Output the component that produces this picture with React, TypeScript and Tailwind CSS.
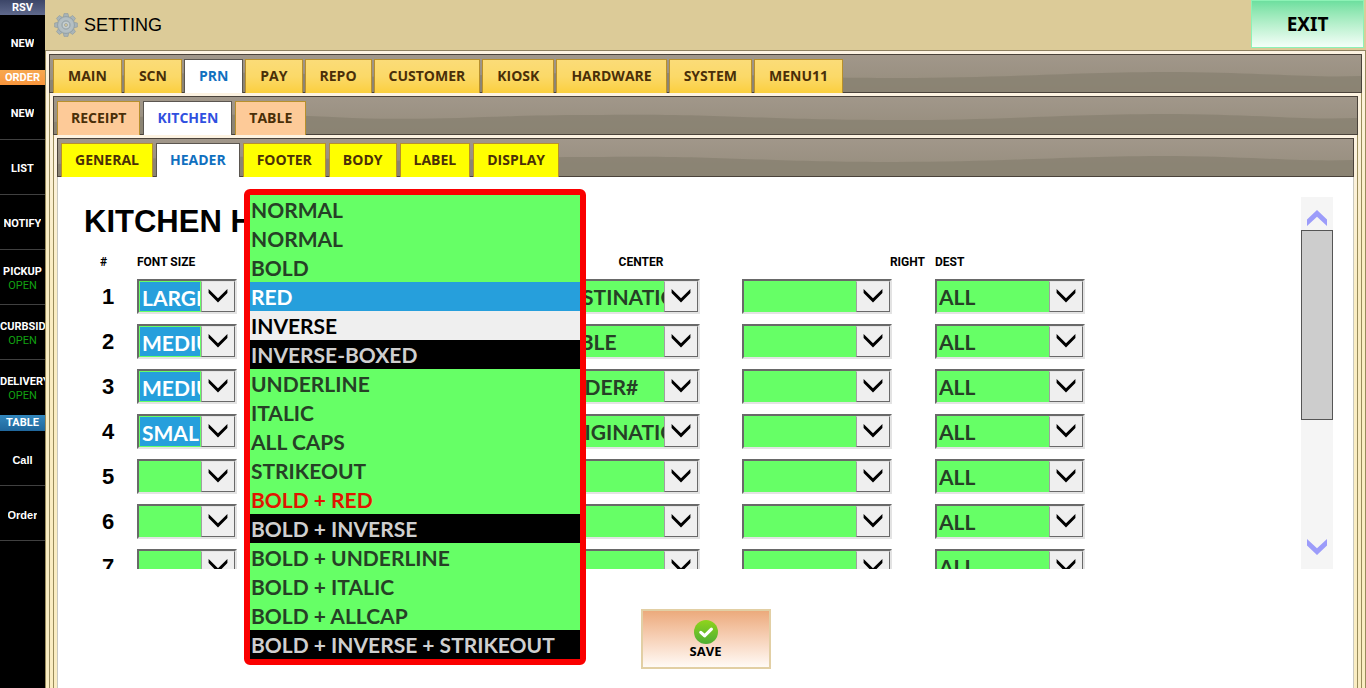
import { useState, type ReactNode } from "react";

type SideEntry = { kind: "heading" | "item"; label: string; tone?: string; open?: boolean; last?: boolean };

const SIDE: SideEntry[] = [
  { kind: "heading", label: "RSV", tone: "h-[15px] bg-linear-to-b from-[#3c4668] to-[#5f698c]" },
  { kind: "item", label: "NEW", last: true },
  { kind: "heading", label: "ORDER", tone: "h-[15px] bg-linear-to-b from-[#f7a850] to-[#f8953c]" },
  { kind: "item", label: "NEW" },
  { kind: "item", label: "LIST" },
  { kind: "item", label: "NOTIFY" },
  { kind: "item", label: "PICKUP", open: true },
  { kind: "item", label: "CURBSIDE", open: true },
  { kind: "item", label: "DELIVERY", open: true, last: true },
  { kind: "heading", label: "TABLE", tone: "h-[16px] bg-linear-to-b from-[#3287bd] to-[#20679c]" },
  { kind: "item", label: "Call" },
  { kind: "item", label: "Order" },
];

function Sidebar() {
  return (
    <nav aria-label="Orders" className="w-[45px] shrink-0 overflow-hidden bg-black font-['Roboto',sans-serif] text-[11px] leading-[14px] font-bold text-white">
      {SIDE.map((e, i) =>
        e.kind === "heading" ? (
          <div key={i} className={`flex items-center justify-center ${e.tone}`}>
            {e.label}
          </div>
        ) : (
          <button
            key={i}
            type="button"
            className={`flex h-[55px] w-full flex-col items-center justify-center border-b pt-[3px] ${e.last ? "border-black" : "border-[#404040]"} ${
              e.label === "Call" || e.label === "Order" ? "font-['Liberation_Sans',sans-serif]" : ""
            }`}
          >
            <span className="max-w-full overflow-hidden">{e.label}</span>
            {e.open && <span className="font-normal text-[#12a012]">OPEN</span>}
          </button>
        ),
      )}
    </nav>
  );
}

function GearIcon() {
  return (
    <svg aria-hidden="true" viewBox="0 0 24 24" className="size-6">
      <g fill="#a9b4b8" stroke="#8c999e" strokeWidth="0.6">
        {[0, 45, 90, 135, 180, 225, 270, 315].map((a) => (
          <path key={a} d="M9.2 4.6 10 0.6h4l0.8 4z" transform={`rotate(${a} 12 12)`} />
        ))}
        <circle cx="12" cy="12" r="8.6" />
      </g>
      <circle cx="12" cy="12" r="7.6" fill="#b4bfc3" />
      <circle cx="12" cy="12" r="4.4" fill="#a3aeb2" stroke="#95a1a6" strokeWidth="0.5" />
      <circle cx="12" cy="12" r="3.2" fill="#c6cfd1" />
      <circle cx="12" cy="12" r="1.5" fill="#dccb98" stroke="#87939a" strokeWidth="0.6" />
    </svg>
  );
}

type BarProps = { label: string; tabs: string[]; active: string; tone: string; activeTone: string; spacing: string; pad: string };

function TabBar({ label, tabs, active, tone, activeTone, spacing, pad }: BarProps) {
  return (
    <div className="relative h-[39px] shrink-0 border border-[#4a423a] bg-linear-to-b from-[#a1978a] to-[#958c7c]">
      <svg aria-hidden="true" viewBox="0 0 1312 37" preserveAspectRatio="none" className="absolute inset-0 size-full">
        <path
          d="M0 25C120 16 200 16 300 21C400 24 440 18 540 18C680 16 700 23 850 23C960 23 1020 17 1130 17C1220 18 1260 23 1312 21V37H0Z"
          fill="#878070"
          fillOpacity="0.75"
        />
      </svg>
      <div role="tablist" aria-label={label} className={`relative flex h-[38px] pt-[4px] pl-[3px] ${spacing}`}>
        {tabs.map((t) => {
          const on = t === active;
          return (
            <button
              key={t}
              type="button"
              role="tab"
              aria-selected={on}
              className={`border border-b-0 pb-[2px] text-[14px] leading-[18px] font-bold ${pad} ${
                on ? `border-[#5b5650] bg-white ${activeTone}` : `border-[#b8902c] text-[#4a2f08] ${tone}`
              }`}
            >
              {t}
            </button>
          );
        })}
      </div>
    </div>
  );
}

function Frame({ children }: { children: ReactNode }) {
  return (
    <div className="flex grow flex-col border-x border-[#998c5c] bg-linear-to-b from-[#fdf3e2] to-[#faedc2] to-30% px-[3px] pt-[3px]">
      {children}
    </div>
  );
}

function Field({ label, value, wide, marked }: { label: string; value: string; wide?: boolean; marked?: boolean }) {
  const choices = value === "" ? [""] : [value, ""];
  return (
    <div
      className={`flex h-[35px] border-2 border-t-[#696969] border-r-[#e3e3e3] border-b-[#e3e3e3] border-l-[#696969] bg-[#66ff66] ${
        wide ? "w-[150px]" : "w-[100px]"
      }`}
    >
      <select
        aria-label={label}
        defaultValue={value}
        className={`min-w-0 grow appearance-none overflow-hidden pl-[2px] font-['Lato',sans-serif] text-[21px] font-bold outline-none ${
          marked ? "m-px bg-[#269fdc] text-white" : "text-[#264026]"
        }`}
      >
        {choices.map((c) => (
          <option key={c} value={c}>
            {c}
          </option>
        ))}
      </select>
      <span className="flex w-[34px] shrink-0 justify-center border border-[#696969] border-t-[#e3e3e3] border-l-[#a0a0a0] bg-[#efefef] pt-[7px]">
        <svg aria-hidden="true" viewBox="0 0 20 14" className="h-[14px] w-[20px]">
          <path d="M0.6 0 10 9.2 19.4 0V4L10 13.6 0.6 4Z" fill="#000" />
        </svg>
      </span>
    </div>
  );
}

const ROWS = [
  { size: "LARGE", center: "DESTINATION" },
  { size: "MEDIUM", center: "TABLE" },
  { size: "MEDIUM", center: "ORDER#" },
  { size: "SMALL", center: "ORIGINATION" },
  { size: "", center: "" },
  { size: "", center: "" },
  { size: "", center: "" },
];

function FieldTable() {
  return (
    <table className="w-[1001px] table-fixed text-left">
      <colgroup>
        <col className="w-[53px]" />
        <col className="w-[107px]" />
        <col className="w-[107px]" />
        <col className="w-[199px]" />
        <col className="w-[192px]" />
        <col className="w-[193px]" />
        <col className="w-[150px]" />
      </colgroup>
      <thead>
        <tr className="h-[29px] font-['Roboto',sans-serif] text-[12px] leading-[16px] font-bold">
          <th className="pt-[4px] pl-[16px]">#</th>
          <th className="pt-[4px]">FONT SIZE</th>
          <th aria-label="Style" />
          <th aria-label="Left" />
          <th className="pt-[4px] pr-[10px] text-center">CENTER</th>
          <th className="pt-[4px] pr-[10px] text-right">RIGHT</th>
          <th className="pt-[4px]">DEST</th>
        </tr>
      </thead>
      <tbody>
        {ROWS.map((r, i) => (
          <tr key={i} className="h-[45px]">
            <th scope="row" className="pl-[18px] font-['Liberation_Sans',sans-serif] text-[22px] leading-[28px] font-bold">
              {i + 1}
            </th>
            <td><Field label={`Font size ${i + 1}`} value={r.size} marked={r.size !== ""} /></td>
            <td><Field label={`Style ${i + 1}`} value="" /></td>
            <td><Field label={`Left ${i + 1}`} value="" wide /></td>
            <td><Field label={`Center ${i + 1}`} value={r.center} wide /></td>
            <td><Field label={`Right ${i + 1}`} value="" wide /></td>
            <td><Field label={`Destination ${i + 1}`} value="ALL" wide /></td>
          </tr>
        ))}
      </tbody>
    </table>
  );
}

const BLACK = "bg-black text-[#cfcfcf]";
const STYLES: [string, string][] = [
  ["NORMAL", ""],
  ["NORMAL", ""],
  ["BOLD", ""],
  ["RED", "bg-[#269fdc] text-white"],
  ["INVERSE", "bg-[#efefef] text-black"],
  ["INVERSE-BOXED", BLACK],
  ["UNDERLINE", ""],
  ["ITALIC", ""],
  ["ALL CAPS", ""],
  ["STRIKEOUT", ""],
  ["BOLD + RED", "text-[#e01400]"],
  ["BOLD + INVERSE", BLACK],
  ["BOLD + UNDERLINE", ""],
  ["BOLD + ITALIC", ""],
  ["BOLD + ALLCAP", ""],
  ["BOLD + INVERSE + STRIKEOUT", BLACK],
];

function StyleMenu() {
  return (
    <ul
      role="listbox"
      aria-label="Style"
      className="absolute top-[12px] left-[186px] w-[342px] rounded-md border-6 border-[#fa0000] bg-[#66ff66] font-['Lato',sans-serif] text-[21px] leading-[30px] font-bold"
    >
      {STYLES.map(([name, tone], i) => (
        <li key={i} role="option" aria-selected={i === 3} className={`h-[29px] pl-px ${tone || "text-[#264026]"}`}>
          {name}
        </li>
      ))}
    </ul>
  );
}

function Scrollbar() {
  return (
    <div className="mr-[20px] flex w-[32px] shrink-0 flex-col bg-[#f5f5f5]">
      <button type="button" aria-label="Scroll up" className="flex h-[33px] shrink-0 justify-center pt-[13px]">
        <svg viewBox="0 0 20 16" className="h-[16px] w-[20px]">
          <path d="M0 9.6 10 0 20 9.6V16L10 6.8 0 16Z" fill="#9c9cfa" />
        </svg>
      </button>
      <div className="h-[190px] border border-[#555] bg-[#cdcdcd]" />
      <div className="grow" />
      <button type="button" aria-label="Scroll down" className="flex h-[33px] shrink-0 justify-center pt-[3px]">
        <svg viewBox="0 0 20 16" className="h-[16px] w-[20px]">
          <path d="M0 0 10 9.2 20 0V6.4L10 16 0 6.4Z" fill="#9c9cfa" />
        </svg>
      </button>
    </div>
  );
}

export default function App() {
  const [saved, setSaved] = useState(false);
  return (
    <div className="flex h-screen overflow-hidden font-['Open_Sans',sans-serif] text-black">
      <Sidebar />
      <main className="flex min-w-0 grow flex-col">
        <header className="flex h-[51px] shrink-0 items-start justify-between border-b border-[#8f8262] bg-[#dccb98]">
          <div className="flex items-center gap-[6px] pt-[13px] pl-[9px]">
            <GearIcon />
            <h1 className="font-['Liberation_Sans',sans-serif] text-[18px] leading-[24px]">SETTING</h1>
          </div>
          <button
            type="button"
            className="mr-[2px] h-[48px] w-[113px] border border-[#8df2b6] bg-linear-to-b from-[#6ddf9f] to-[#f4fff9] font-['Noto_Sans',sans-serif] text-[19px] leading-[26px] font-bold"
          >
            EXIT
          </button>
        </header>
        <Frame>
          <TabBar
            label="Settings"
            tabs={["MAIN", "SCN", "PRN", "PAY", "REPO", "CUSTOMER", "KIOSK", "HARDWARE", "SYSTEM", "MENU11"]}
            active="PRN"
            tone="bg-linear-to-b from-[#fbdc78] via-[#fbd968] to-[#fbcf3c]"
            activeTone="text-[#1070bf]"
            spacing="gap-[2px]"
            pad="px-[14px]"
          />
          <Frame>
            <TabBar
              label="Printers"
              tabs={["RECEIPT", "KITCHEN", "TABLE"]}
              active="KITCHEN"
              tone="bg-[#fdca98]"
              activeTone="text-[#3050e0]"
              spacing="gap-[3px]"
              pad="px-[13px]"
            />
            <Frame>
              <TabBar
                label="Kitchen"
                tabs={["GENERAL", "HEADER", "FOOTER", "BODY", "LABEL", "DISPLAY"]}
                active="HEADER"
                tone="bg-[#ffff00]"
                activeTone="text-[#1070bf]"
                spacing="gap-[3px]"
                pad="px-[13px]"
              />
              <section className="relative grow border-x border-[#c8c8c0] bg-white pt-[20px]">
                <div className="flex h-[372px]">
                  <div className="min-w-0 grow overflow-hidden pl-[26px]">
                    <h2 className="h-[48px] font-['Liberation_Sans',sans-serif] text-[31px] leading-[50px] font-bold">KITCHEN HEADER</h2>
                    <FieldTable />
                  </div>
                  <Scrollbar />
                </div>
                <button
                  type="button"
                  aria-pressed={saved}
                  onClick={() => setSaved(true)}
                  className="mx-auto mt-[40px] flex h-[60px] w-[130px] flex-col items-center border-2 border-[#e2cfa4] bg-linear-to-b from-[#ecaa7c] to-[#fffaf6] pt-[9px] text-[13px] leading-[14px] font-bold"
                >
                  <svg aria-hidden="true" viewBox="0 0 24 24" className="size-6">
                    <defs>
                      <linearGradient id="ok" x1="0" y1="0" x2="0" y2="1">
                        <stop offset="0" stopColor="#8fd41c" />
                        <stop offset="1" stopColor="#4fae34" />
                      </linearGradient>
                    </defs>
                    <circle cx="12" cy="12" r="12" fill="url(#ok)" />
                    <path d="M6.8 12.4 10.6 15.8 17.4 9.2" fill="none" stroke="#fff" strokeWidth="3.2" strokeLinecap="round" strokeLinejoin="round" />
                  </svg>
                  SAVE
                </button>
                <StyleMenu />
              </section>
            </Frame>
          </Frame>
        </Frame>
      </main>
    </div>
  );
}
